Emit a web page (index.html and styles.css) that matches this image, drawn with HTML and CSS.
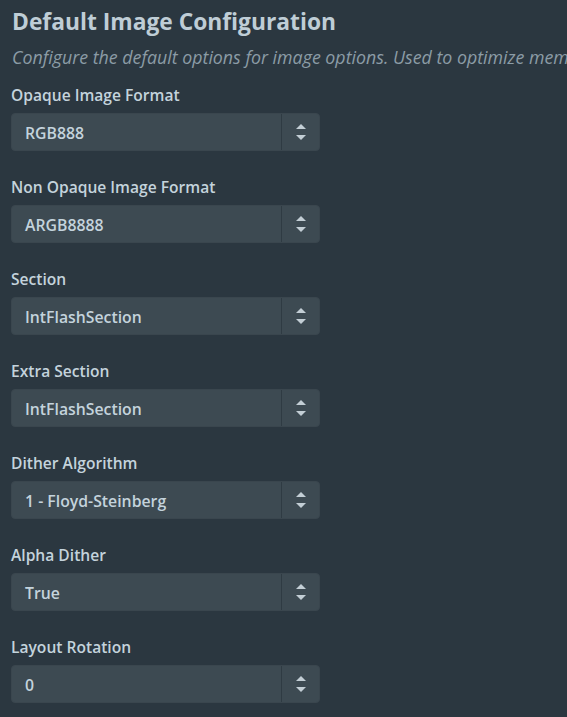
FILE: index.html
```html
<!DOCTYPE html>
<html>
<head>
<meta charset="utf-8">
<link rel="stylesheet" href="styles.css">
</head>
<body>
<div class="page">
  <h1 class="title">Default Image Configuration</h1>
  <p class="subtitle">Configure the default options for image options. Used to optimize memory usage and performance.</p>

  <div class="field">
    <label class="label">Opaque Image Format</label>
    <div class="select"><span class="value">RGB888</span><span class="arrows"><i class="up"></i><i class="down"></i></span></div>
  </div>
  <div class="field">
    <label class="label">Non Opaque Image Format</label>
    <div class="select"><span class="value">ARGB8888</span><span class="arrows"><i class="up"></i><i class="down"></i></span></div>
  </div>
  <div class="field">
    <label class="label">Section</label>
    <div class="select"><span class="value">IntFlashSection</span><span class="arrows"><i class="up"></i><i class="down"></i></span></div>
  </div>
  <div class="field">
    <label class="label">Extra Section</label>
    <div class="select"><span class="value">IntFlashSection</span><span class="arrows"><i class="up"></i><i class="down"></i></span></div>
  </div>
  <div class="field">
    <label class="label">Dither Algorithm</label>
    <div class="select"><span class="value">1 - Floyd-Steinberg</span><span class="arrows"><i class="up"></i><i class="down"></i></span></div>
  </div>
  <div class="field">
    <label class="label">Alpha Dither</label>
    <div class="select"><span class="value">True</span><span class="arrows"><i class="up"></i><i class="down"></i></span></div>
  </div>
  <div class="field">
    <label class="label">Layout Rotation</label>
    <div class="select"><span class="value">0</span><span class="arrows"><i class="up"></i><i class="down"></i></span></div>
  </div>
</div>
</body>
</html>
```

FILE: styles.css
```css
html, body {
  margin: 0;
  padding: 0;
  background: #2b3740;
  overflow: hidden;
}
.page {
  padding: 6px 0 0 11px;
  font-family: "Open Sans", "Noto Sans", sans-serif;
  white-space: nowrap;
  overflow: hidden;
}
.title {
  margin: 0 0 0 1px;
  font-size: 22.8px;
  font-weight: 700;
  line-height: 32px;
  color: #bfcdd6;
}
.subtitle {
  margin: 8px 0 0 1px;
  font-size: 17.8px;
  font-style: italic;
  line-height: 22px;
  color: #8b9ca6;
}
.field {
  display: flex;
  flex-direction: column;
  margin-top: 17px;
}
.field + .field {
  margin-top: 26px;
}
.label {
  font-size: 15.6px;
  font-weight: 600;
  line-height: 20px;
  color: #c4d3dc;
  margin-bottom: 8px;
}
.select {
  display: flex;
  width: 309px;
  height: 38px;
  background: #3d4a52;
  border-radius: 4px;
  box-sizing: border-box;
  border: 1px solid #3a464e;
}
.value {
  flex: 1;
  display: flex;
  align-items: center;
  padding: 1px 0 0 13px;
  font-size: 15.8px;
  font-weight: 600;
  color: #c4d3dc;
  border-right: 1px solid #2f3b43;
}
.arrows {
  width: 37px;
  display: flex;
  flex-direction: column;
  align-items: center;
  justify-content: center;
  gap: 6px;
}
.up, .down {
  display: block;
  width: 0;
  height: 0;
  border-left: 5px solid transparent;
  border-right: 5px solid transparent;
}
.up {
  border-bottom: 5px solid #c3ced5;
}
.down {
  border-top: 5px solid #c3ced5;
}
```
